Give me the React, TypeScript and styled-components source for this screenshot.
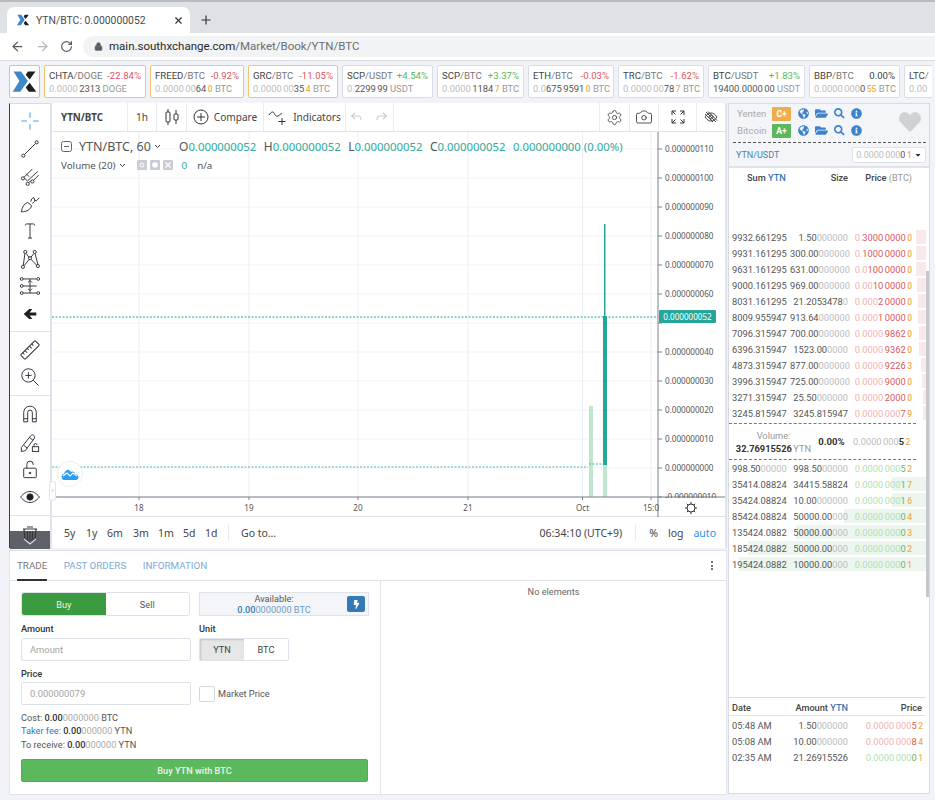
import React from 'react';
import styled, { createGlobalStyle } from 'styled-components';
import { ArrowLeft, ArrowRight, RotateCw, Lock, X, Plus, Settings, Camera } from 'lucide-react';
import { FaGlobeAmericas, FaFolderOpen, FaSearch, FaInfoCircle, FaHeart, FaBolt, FaCaretDown } from 'react-icons/fa';

const GlobalStyle = createGlobalStyle`
  html, body { margin: 0; padding: 0; background: #f1f3f8; }
  * { box-sizing: border-box; }
  body { font-family: Roboto, "Liberation Sans", sans-serif; color: #333; }
`;

const SITE_BLUE = '#337ab7';

const Page = styled.div`
  width: 935px;
  height: 800px;
  overflow: hidden;
  display: flex;
  flex-direction: column;
  background: #f1f3f8;
`;

/* browser chrome */
const TabStrip = styled.div`
  height: 33px;
  background: #dee1e6;
  border-top: 2px solid #b9bbbd;
  padding: 5px 0 0 7px;
  display: flex;
  align-items: stretch;
`;

const Tab = styled.div`
  width: 183px;
  background: #fff;
  border-radius: 7px 7px 0 0;
  display: flex;
  align-items: center;
  padding: 0 6px 0 9px;
  font: 10.4px Roboto, sans-serif;
  color: #4a4d50;
  gap: 6px;
`;

const TabTitle = styled.span`
  flex: 1;
  white-space: nowrap;
`;

const NewTab = styled.div`
  width: 32px;
  display: flex;
  align-items: center;
  justify-content: center;
  color: #333;
`;

const AddressBar = styled.div`
  height: 28px;
  background: #fff;
  border-bottom: 1px solid #dadce0;
  display: flex;
  align-items: center;
  padding: 0 0 1px 10px;
`;

const NavIcons = styled.div`
  display: flex;
  gap: 10px;
  width: 73px;
  align-items: center;
`;

const UrlPill = styled.div`
  flex: 1;
  height: 21px;
  background: #f1f3f4;
  border-radius: 11px 0 0 11px;
  display: flex;
  align-items: center;
  padding-left: 11px;
  gap: 6px;
  font: 11.5px Roboto, sans-serif;
  color: #6b6e72;
`;

const UrlHost = styled.span`
  color: #26282b;
`;

/* ticker */
const TickerRow = styled.div`
  height: 42px;
  padding: 4px 0 5px 9px;
  display: flex;
  gap: 4px;
  overflow: hidden;
  width: 932px;
`;

const LogoBox = styled.div`
  width: 31px;
  flex: none;
  background: #fff;
  border: 1px solid #a9c9e6;
  border-radius: 2px;
  display: flex;
  align-items: center;
  justify-content: center;
`;

const TickerCard = styled.div<{ $w: number; $hot?: boolean }>`
  width: ${(p) => p.$w}px;
  flex: none;
  background: #fff;
  border: 1px solid ${(p) => (p.$hot ? '#f6c372' : '#d9dde5')};
  border-radius: 2px;
  padding: 3px 4px 0 4px;
  font-size: 9.3px;
  line-height: 13px;
  white-space: nowrap;
`;

const TickerTop = styled.div`
  display: flex;
  justify-content: space-between;
  color: #444;
  font-size: 9.6px;
`;

const Pair = styled.span`
  color: #777;
`;

const Pct = styled.span<{ $dir: 'up' | 'down' | 'flat' }>`
  color: ${(p) => (p.$dir === 'up' ? '#5cb85c' : p.$dir === 'down' ? '#e0565b' : '#444')};
`;

const TickerPrice = styled.div`
  font-size: 9.4px;
  color: #999;
  word-spacing: -1px;
`;

const TickerUnit = styled.span`
  word-spacing: 0;
`;

const Pale = styled.span<{ $tone?: 'gray' | 'red' | 'green' }>`
  color: ${(p) => (p.$tone === 'red' ? '#f3b3b5' : p.$tone === 'green' ? '#b3dfb3' : '#bcbcbc')};
`;

const Strong = styled.span<{ $tone?: 'gray' | 'red' | 'green' }>`
  color: ${(p) => (p.$tone === 'red' ? '#d9575f' : p.$tone === 'green' ? '#68b868' : '#555')};
`;

const Tail = styled.span`
  color: #f0ad4e;
  font-size: 8.5px;
  font-weight: 500;
  margin-left: 1.5px;
`;

const Digits = ({ pale, strong, tail, tone }: { pale?: string; strong?: string; tail?: string; tone?: 'gray' | 'red' | 'green' }) => (
  <span>
    <Pale $tone={tone}>{pale}</Pale>
    <Strong $tone={tone}>{strong}</Strong>
    {tail && <Tail>{tail}</Tail>}
  </span>
);

/* main layout */
const Main = styled.div`
  display: flex;
  padding-left: 9px;
  gap: 1px;
  height: 692px;
`;

const LeftColumn = styled.div`
  width: 718px;
  flex: none;
  display: flex;
  flex-direction: column;
  gap: 2px;
`;

const ChartPanel = styled.div`
  height: 445px;
  display: flex;
  gap: 2px;
  padding-right: 2px;
  background: #e0e3eb;
`;

const Rail = styled.div`
  width: 41px;
  flex: none;
  background: #fff;
  border-left: 1px solid #3a3c40;
  border-top: 1px solid #d8dbe3;
  display: flex;
  flex-direction: column;
  position: relative;
`;

const RailGroup = styled.div<{ $h: number }>`
  height: ${(p) => p.$h}px;
  flex: none;
  border-bottom: 1px solid #e0e3eb;
  display: flex;
  flex-direction: column;
  justify-content: center;
  align-items: center;
`;

const RailButton = styled.div`
  height: 27.5px;
  display: flex;
  align-items: center;
  justify-content: center;
`;

const RailFoot = styled.div`
  flex: 1;
  display: flex;
  justify-content: center;
  padding-top: 10px;
  position: relative;
`;

const DarkBand = styled.div`
  position: absolute;
  left: 0;
  right: 0;
  bottom: -1px;
  height: 18px;
  background: #5f6168;
`;

const FoldHandle = styled.div`
  position: absolute;
  right: -6px;
  top: 377px;
  width: 7px;
  height: 20px;
  background: #fff;
  border: 1px solid #e0e3eb;
  border-radius: 3px;
  color: #b0b3bb;
  font: 7px Roboto, sans-serif;
  display: flex;
  align-items: center;
  justify-content: center;
  z-index: 2;
`;

const ChartBody = styled.div`
  flex: 1;
  display: flex;
  flex-direction: column;
  background: #fff;
`;

const ChartTop = styled.div`
  height: 29px;
  display: flex;
  border-bottom: 1px solid #e0e3eb;
  font: 10.1px "Noto Sans", sans-serif;
  color: #444;
`;

const TopCell = styled.div<{ $w: number; $end?: boolean }>`
  width: ${(p) => p.$w}px;
  flex: none;
  display: flex;
  align-items: center;
  justify-content: center;
  gap: 5px;
  border-right: ${(p) => (p.$end ? 'none' : '1px solid #e9ebf1')};
`;

const SymbolCell = styled(TopCell)`
  justify-content: flex-start;
  padding-left: 9px;
  font-weight: 700;
  font-size: 9.8px;
`;

const TopSpacer = styled.div`
  flex: 1;
  border-right: 1px solid #e9ebf1;
`;

const ChartArea = styled.div`
  height: 385px;
  position: relative;
  border-bottom: 1px solid #e0e3eb;
`;

const ChartSvg = styled.svg`
  display: block;
  text {
    font-family: "Noto Sans", sans-serif;
  }
`;

const Legend = styled.div`
  position: absolute;
  left: 9px;
  top: 5px;
  font: 12.5px "Noto Sans", sans-serif;
  color: #555;
`;

const LegendMain = styled.div`
  display: flex;
  align-items: center;
  height: 18px;
  white-space: nowrap;
`;

const LegendSymbol = styled.span`
  margin: 0 0 0 7px;
  width: 100px;
  display: flex;
  align-items: center;
  gap: 3px;
`;

const Ohlc = styled.span`
  color: #2fa99b;
  font-size: 11.35px;
  margin-right: 7.5px;
  b {
    color: #555;
    font-weight: 400;
    font-size: 12px;
  }
`;

const LegendVolume = styled.div`
  display: flex;
  align-items: center;
  gap: 3px;
  font-size: 9.8px;
  color: #555;
  height: 18px;
  margin-top: 1px;
`;

const VolumeCaret = styled.span`
  display: flex;
  margin-right: 8px;
`;

const MiniBox = styled.span`
  width: 10px;
  height: 10px;
  background: #c9ccd4;
  border-radius: 1px;
  display: flex;
  align-items: center;
  justify-content: center;
`;

const VolumeValue = styled.span`
  color: #2fa99b;
  margin: 0 7px 0 6px;
`;

const TvBadge = styled.div`
  position: absolute;
  left: 5px;
  top: 329px;
  width: 26px;
  height: 26px;
  border-radius: 50%;
  border: 1px solid #eceef3;
  background: #fff;
  display: flex;
  align-items: center;
  justify-content: center;
`;

const PriceTag = styled.div`
  position: absolute;
  left: 607px;
  top: 178px;
  width: 57px;
  height: 13px;
  background: #26a69a;
  color: #fff;
  border-radius: 1px;
  font: 8.1px/13px "Noto Sans", sans-serif;
  text-align: center;
`;

const RangeBar = styled.div`
  flex: 1;
  display: flex;
  align-items: center;
  padding-left: 12px;
  font: 10.5px "Noto Sans", sans-serif;
  color: #444;
`;

const RangeItem = styled.span<{ $w: number }>`
  width: ${(p) => p.$w}px;
  flex: none;
`;

const RangeRule = styled.span<{ $ml: number; $mr: number }>`
  width: 1px;
  height: 16px;
  background: #e9ebf1;
  margin: 0 ${(p) => p.$mr}px 0 ${(p) => p.$ml}px;
`;

const RangeRight = styled.div`
  margin-left: auto;
  display: flex;
  align-items: center;
  padding-right: 9px;
`;

const ScaleLink = styled.span<{ $on?: boolean }>`
  color: ${(p) => (p.$on ? '#2196f3' : '#444')};
  margin-left: 10px;
`;

/* trade panel */
const TradePanel = styled.div`
  height: 245px;
  background: #fff;
  border: 1px solid #e0e3eb;
  display: flex;
  flex-direction: column;
`;

const TabsRow = styled.div`
  height: 30px;
  display: flex;
  border-bottom: 1px solid #dfe2e8;
  padding: 0 13px 0 7px;
  gap: 16.5px;
  align-items: stretch;
  font-size: 9.8px;
`;

const PanelTab = styled.div<{ $active?: boolean }>`
  display: flex;
  align-items: center;
  color: ${(p) => (p.$active ? '#777' : '#7fa9d2')};
  border-bottom: 2px solid ${(p) => (p.$active ? '#333' : 'transparent')};
  margin-bottom: -1px;
`;

const Kebab = styled.div`
  margin-left: auto;
  display: flex;
  flex-direction: column;
  justify-content: center;
  gap: 1.5px;
  i {
    width: 2px;
    height: 2px;
    background: #444;
    border-radius: 50%;
    display: block;
  }
`;

const TradeBody = styled.div`
  flex: 1;
  display: flex;
`;

const FormPane = styled.div`
  width: 371px;
  flex: none;
  border-right: 1px solid #dfe2e8;
  padding: 11px 11px 0 11px;
  font-size: 9.2px;
`;

const EmptyPane = styled.div`
  flex: 1;
  text-align: center;
  padding-top: 5px;
  font-size: 9.2px;
  color: #666;
`;

const FormGrid = styled.div`
  display: grid;
  grid-template-columns: 170px 170px;
  column-gap: 8px;
`;

const BuySell = styled.div`
  height: 24px;
  display: flex;
  border: 1px solid #dfe2e8;
  border-radius: 2px;
  width: 169px;
`;

const SideButton = styled.div<{ $on?: boolean }>`
  flex: 1;
  display: flex;
  align-items: center;
  justify-content: center;
  background: ${(p) => (p.$on ? '#3c9a41' : '#fff')};
  color: ${(p) => (p.$on ? '#e6f5e6' : '#555')};
  border-radius: 2px 0 0 2px;
`;

const Available = styled.div`
  height: 24px;
  background: #f3f5f9;
  border: 1px solid #dfe2e8;
  text-align: center;
  line-height: 10.5px;
  padding: 1px 20px 0 0;
  position: relative;
  color: #555;
`;

const BoltButton = styled.div`
  position: absolute;
  right: 3px;
  top: 3px;
  width: 18px;
  height: 16px;
  background: ${SITE_BLUE};
  border-radius: 2px;
  display: flex;
  align-items: center;
  justify-content: center;
  color: #fff;
`;

const BlueNum = styled.div`
  color: #6f9cc6;
  b {
    color: ${SITE_BLUE};
    font-weight: 500;
  }
`;

const FieldLabel = styled.div<{ $top: number; $bottom?: number }>`
  font-weight: 500;
  line-height: 12px;
  margin-top: ${(p) => p.$top}px;
  margin-bottom: ${(p) => p.$bottom ?? 3}px;
  color: #333;
`;

const TextBox = styled.div`
  height: 23px;
  width: 170px;
  border: 1px solid #dfe2e8;
  border-radius: 2px;
  padding-left: 8px;
  display: flex;
  align-items: center;
  color: #a5a5a5;
  font-size: 9.4px;
`;

const UnitGroup = styled.div`
  display: flex;
  width: 90px;
  height: 23px;
  border: 1px solid #dfe2e8;
  border-radius: 2px;
`;

const UnitButton = styled.div<{ $on?: boolean }>`
  flex: 1;
  display: flex;
  align-items: center;
  justify-content: center;
  background: ${(p) => (p.$on ? '#e6e6e6' : '#fff')};
  box-shadow: ${(p) => (p.$on ? 'inset 1px 1px 2px rgba(0,0,0,.15)' : 'none')};
  color: #444;
`;

const MarketCheck = styled.label`
  display: flex;
  align-items: center;
  gap: 3px;
  height: 23px;
  color: #555;
`;

const CheckBox = styled.span`
  width: 16px;
  height: 16px;
  border: 1px solid #d5d8df;
  border-radius: 2px;
`;

const Summary = styled.div`
  margin-top: 6px;
  line-height: 13.4px;
  color: #555;
  b {
    color: #333;
    font-weight: 500;
  }
`;

const FeeLabel = styled.span`
  color: ${SITE_BLUE};
`;

const Zeros = styled.span`
  color: #aaa;
`;

const SubmitButton = styled.div`
  margin-top: 8px;
  height: 23px;
  background: #5cb85c;
  border: 1px solid #4cae4c;
  border-radius: 2px;
  display: flex;
  align-items: center;
  justify-content: center;
  color: #e9f7e9;
  width: 347px;
  font-weight: 500;
`;

/* right column */
const RightColumn = styled.div`
  width: 202px;
  flex: none;
  height: 691px;
  display: flex;
  flex-direction: column;
  background: #fff;
  border: 1px solid #d8dbe3;
  position: relative;
  font-size: 9.3px;
`;

const CoinHead = styled.div`
  height: 64px;
  background: #f3f5f9;
  border-bottom: 2px solid #dfe2e8;
  padding: 1px 3px 0 4px;
  position: relative;
`;

const CoinRow = styled.div`
  display: flex;
  align-items: center;
  height: 17px;
  color: #aaa;
  font-size: 9.6px;
`;

const CoinName = styled.span`
  width: 39px;
  padding-left: 4px;
`;

const Grade = styled.span<{ $c: string }>`
  width: 19px;
  height: 14px;
  background: ${(p) => p.$c};
  color: #fff;
  font-size: 8.5px;
  font-weight: 700;
  border-radius: 1px;
  display: flex;
  align-items: center;
  justify-content: center;
  margin-right: 7px;
`;

const CoinIcons = styled.span`
  display: flex;
  gap: 6px;
  color: #3c83cc;
  align-items: center;
`;

const HeartWrap = styled.div`
  position: absolute;
  right: 8px;
  top: 7px;
  color: #cfd2d4;
`;

const DashRule = styled.div`
  border-top: 1px dashed #555;
  margin-top: 3px;
`;

const MarketRow = styled.div`
  display: flex;
  justify-content: space-between;
  align-items: center;
  height: 22px;
  padding: 1px 0 0 3px;
  color: #4a7fb5;
  font-size: 9px;
`;

const MarketSelect = styled.div`
  width: 74px;
  height: 16px;
  border: 1px solid #dfe2e8;
  border-radius: 2px;
  background: #fff;
  display: flex;
  align-items: center;
  justify-content: center;
  gap: 2px;
  word-spacing: -1px;
  color: #333;
`;

const BookHead = styled.div`
  height: 19px;
  display: grid;
  grid-template-columns: 119px 64px;
  align-items: center;
  font-weight: 500;
  color: #444;
  font-size: 9.2px;
`;

const SumHead = styled.span`
  padding-left: 18px;
  display: flex;
  justify-content: space-between;
`;

const HeadUnit = styled.span`
  color: ${SITE_BLUE};
`;

const HeadPale = styled.span`
  color: #999;
  font-weight: 400;
`;

const AskList = styled.div`
  height: 236px;
  display: flex;
  flex-direction: column;
  justify-content: flex-end;
  padding-bottom: 2px;
`;

const BookRow = styled.div`
  height: 16px;
  display: grid;
  grid-template-columns: 58px 58px 64px;
  align-items: center;
  padding-left: 3px;
  position: relative;
  white-space: nowrap;
  color: #555;
  word-spacing: -0.8px;
`;

const Cell = styled.span<{ $right?: boolean }>`
  text-align: ${(p) => (p.$right ? 'right' : 'left')};
  position: relative;
`;

const DepthBar = styled.div<{ $side: 'ask' | 'bid' }>`
  position: absolute;
  right: 3px;
  top: 1px;
  bottom: 1px;
  background: ${(p) => (p.$side === 'ask' ? '#f9e9ea' : '#ecf5ee')};
`;

const MidBlock = styled.div`
  height: 37px;
  margin-right: 13px;
  border-top: 1px dashed #777;
  border-bottom: 1px dashed #777;
  display: flex;
  align-items: center;
  padding-left: 3px;
  word-spacing: -0.8px;
  white-space: nowrap;
`;

const VolumeBlock = styled.div`
  width: 83px;
  text-align: center;
  color: #999;
  line-height: 13px;
  b {
    color: #333;
    font-weight: 700;
  }
`;

const MidPct = styled.b`
  color: #333;
  width: 33px;
  text-align: center;
  font-size: 9.6px;
  margin-right: 5px;
`;

const BidList = styled.div``;

const Filler = styled.div`
  flex: 1;
`;

const TradesHead = styled.div`
  height: 19px;
  border-top: 1px solid #d8dbe3;
  border-bottom: 1px solid #dfe2e8;
  margin-right: 4px;
  display: grid;
  grid-template-columns: 42px 74px 1fr;
  align-items: center;
  padding: 1px 3px 0;
  font-weight: 500;
  color: #444;
  font-size: 9.2px;
`;

const TradeRow = styled.div`
  height: 16px;
  display: grid;
  grid-template-columns: 42px 74px 1fr;
  align-items: center;
  padding: 0 6px 0 3px;
  color: #555;
  word-spacing: -0.8px;
  white-space: nowrap;
`;

const TradeTime = styled.span`
  word-spacing: 0;
`;

const TradeList = styled.div`
  height: 77px;
  padding-top: 1px;
`;

const ScrollThumb = styled.div`
  position: absolute;
  right: 0;
  top: 167px;
  width: 3.5px;
  height: 326px;
  background: #c4c7cc;
`;

type Tone = 'gray' | 'red' | 'green';

const tickers = [
  { w: 102, hot: true, name: 'CHTA', pair: '/DOGE', pct: '-22.84%', dir: 'down', pale: '0.0000 ', strong: '2313', tail: '', unit: ' DOGE' },
  { w: 94, hot: true, name: 'FREED', pair: '/BTC', pct: '-0.92%', dir: 'down', pale: '0.0000 00', strong: '64', tail: '0', unit: ' BTC' },
  { w: 90, hot: true, name: 'GRC', pair: '/BTC', pct: '-11.05%', dir: 'down', pale: '0.0000 00', strong: '35', tail: '4', unit: ' BTC' },
  { w: 91, name: 'SCP', pair: '/USDT', pct: '+4.54%', dir: 'up', pale: '0.', strong: '2299 99', tail: '', unit: ' USDT' },
  { w: 87, name: 'SCP', pair: '/BTC', pct: '+3.37%', dir: 'up', pale: '0.0000 ', strong: '1184', tail: '7', unit: ' BTC' },
  { w: 86, name: 'ETH', pair: '/BTC', pct: '-0.03%', dir: 'down', pale: '0.0', strong: '675 9591', tail: '0', unit: ' BTC' },
  { w: 86, name: 'TRC', pair: '/BTC', pct: '-1.62%', dir: 'down', pale: '0.0000 00', strong: '78', tail: '7', unit: ' BTC' },
  { w: 97, name: 'BTC', pair: '/USDT', pct: '+1.83%', dir: 'up', pale: '', strong: '19400.0000 00', tail: '', unit: ' USDT' },
  { w: 91, name: 'BBP', pair: '/BTC', pct: '0.00%', dir: 'flat', pale: '0.0000 000', strong: '0', tail: '55', unit: ' BTC' },
] as const;

const asks = [
  ['9932.661295', '1.50', '000000', '0.', '3000 0000', '0', 10],
  ['9931.161295', '300.00', '000000', '0.', '1000 0000', '0', 10],
  ['9631.161295', '631.00', '000000', '0.0', '100 0000', '0', 10],
  ['9000.161295', '969.00', '000000', '0.00', '10 0000', '0', 9],
  ['8031.161295', '21.2053478', '0', '0.000', '2 0000', '0', 8],
  ['8009.955947', '913.64', '000000', '0.000', '1 0000', '0', 8],
  ['7096.315947', '700.00', '000000', '0.0000 ', '9862', '0', 7],
  ['6396.315947', '1523.00', '0000', '0.0000 ', '9362', '0', 7],
  ['4873.315947', '877.00', '000000', '0.0000 ', '9226', '3', 5],
  ['3996.315947', '725.00', '000000', '0.0000 ', '9000', '0', 4],
  ['3271.315947', '25.50', '000000', '0.0000 ', '2000', '0', 3],
  ['3245.815947', '3245.815947', '', '0.0000 000', '7', '9', 3],
] as const;

const bids = [
  ['998.50', '00000', '998.50', '00000', '0.0000 000', '5', '2', 0],
  ['35414.08824', '', '34415.58824', '', '0.0000 000', '1', '7', 34],
  ['35424.08824', '', '10.00', '000000', '0.0000 000', '1', '6', 34],
  ['85424.08824', '', '50000.00', '000', '0.0000 000', '0', '4', 82],
  ['135424.0882', '', '50000.00', '000', '0.0000 000', '0', '3', 130],
  ['185424.0882', '', '50000.00', '000', '0.0000 000', '0', '2', 178],
  ['195424.0882', '', '10000.00', '000', '0.0000 000', '0', '1', 187],
] as const;

const trades: { time: string; amt: string; zeros: string; price: [string, string]; tone: Tone }[] = [
  { time: '05:48 AM', amt: '1.50', zeros: '000000', price: ['5', '2'], tone: 'red' },
  { time: '05:08 AM', amt: '10.00', zeros: '000000', price: ['8', '4'], tone: 'red' },
  { time: '02:35 AM', amt: '21.26915526', zeros: '', price: ['0', '1'], tone: 'green' },
];

const axisLabels = ['0.000000110', '0.000000100', '0.000000090', '0.000000080', '0.000000070', '0.000000060', '', '0.000000040', '0.000000030', '0.000000020', '0.000000010', '0.000000000', '-0.000000010'];
const timeLabels: [number, string][] = [[139, '18'], [249, '19'], [358, '20'], [468, '21'], [582.5, 'Oct'], [651, '15:0']];

const ToolIcon = ({ children, color = '#2a2e39' }: { children: React.ReactNode; color?: string }) => (
  <svg width="22" height="22" viewBox="0 0 28 28" fill="none" stroke={color} strokeWidth="1.2">
    {children}
  </svg>
);

const railGroups: { h: number; tools: React.ReactNode[] }[] = [
  {
    h: 228,
    tools: [
      <ToolIcon color="#3f96e6"><path d="M14 3v7M14 18v7M3 14h7M18 14h7" /></ToolIcon>,
      <ToolIcon><circle cx="5.5" cy="22.5" r="2" /><circle cx="22.5" cy="5.5" r="2" /><path d="M7 21 21 7" /></ToolIcon>,
      <ToolIcon><circle cx="5" cy="17" r="2" /><circle cx="11" cy="24" r="2" /><circle cx="17" cy="21" r="2" /><path d="M6.500 15.500 17 5M12.500 22.500 15 20M7 17l4 3.500M11 20 24 8M18.500 19.500 25 13M9 11l4 4" /></ToolIcon>,
      <ToolIcon><path d="M3 24c1-6 3-10 8-12l5 4c-1 5-6 8-13 8zM15 11c.5-3 2-5 4-5l1 3c0 2-1 3-3 4M20 9l2 1 4-4" /></ToolIcon>,
      <ToolIcon><path d="M8 7c0-1.500 1-2 2-2h8c1 0 2 .5 2 2M14 5v18M11.500 23h5" /></ToolIcon>,
      <ToolIcon><circle cx="5" cy="24" r="2" /><circle cx="8" cy="5" r="2" /><circle cx="14" cy="13" r="2" /><circle cx="20" cy="5" r="2" /><circle cx="24" cy="23" r="2" /><path d="M5.500 22 7.500 7M9 7l4 5M15 12l4-5M20.500 7 24 21M6.500 22.500 13 14.500M15.500 14.500 22.500 22" /></ToolIcon>,
      <ToolIcon><circle cx="3.500" cy="5" r="1.800" /><circle cx="24.500" cy="5" r="1.800" /><circle cx="3.500" cy="23" r="1.800" /><circle cx="24.500" cy="23" r="1.800" /><circle cx="3.500" cy="14" r="1.800" /><path d="M5.500 5h17M5.500 23h17M5.500 14h17M14 5v18M11.500 17.500 14 20l2.500-2.500M11.500 9.500 14 7l2.500 2.500" /></ToolIcon>,
      <ToolIcon><path fill="#1c1e24" stroke="none" d="M6 14l7-6.500h4l-3.500 4.500H22v4h-8.500l3.500 4.500h-4z" /></ToolIcon>,
    ],
  },
  {
    h: 64,
    tools: [
      <ToolIcon><g transform="rotate(-45 14 14)"><rect x="1" y="10" width="26" height="8" rx="1" /><path d="M5 10v3M9 10v4M13 10v3M17 10v4M21 10v3" /></g></ToolIcon>,
      <ToolIcon><circle cx="12" cy="12" r="8.500" /><path d="M12 8v8M8 12h8M18 18l7 7" /></ToolIcon>,
    ],
  },
  {
    h: 120,
    tools: [
      <ToolIcon><path d="M6 24V12a8 8 0 0 1 16 0v12h-5V12a3 3 0 0 0-6 0v12zM6 20h5M17 20h5" /></ToolIcon>,
      <ToolIcon><path d="M3 21 15 6c1.500-1.500 3-1.500 4 0 1 1 1 2.500 0 4L8 25l-5 1zM6 18l4.500 4M13 8l5 4" /><rect x="17" y="20" width="8" height="6" /><path d="M19 20v-2a2 2 0 0 1 4 0" /></ToolIcon>,
      <ToolIcon><rect x="6" y="13" width="16" height="12" rx="1" /><path d="M10 13V8a4 4 0 0 1 8 0v1" /><circle cx="14" cy="19" r="1" fill="#2a2e39" /></ToolIcon>,
      <ToolIcon><path d="M2 14c4-5 8-7 12-7s8 2 12 7c-4 5-8 7-12 7s-8-2-12-7z" /><circle cx="14" cy="14" r="4" fill="#1c1e24" /></ToolIcon>,
    ],
  },
];

const BrandX = ({ size }: { size: number }) => (
  <svg width={size} height={size} viewBox="0 0 32 32">
    <polygon points="3,4 12,4 20,15.500 11,28 2,28 10,15.500" fill="#3e87c9" />
    <polygon points="20,4 29,4 22,13.500 17.500,8" fill="#1c1e22" />
    <polygon points="17.500,23 22,17.500 30,28 21,28" fill="#1c1e22" />
  </svg>
);

const CoinLinks = () => (
  <CoinIcons>
    <FaGlobeAmericas size={11} />
    <FaFolderOpen size={13} />
    <FaSearch size={10.5} />
    <FaInfoCircle size={11} />
  </CoinIcons>
);

const Caret = () => (
  <svg width="7" height="5" viewBox="0 0 7 5" fill="none" stroke="#444">
    <path d="M1 1l2.500 2.500L6 1" />
  </svg>
);

const App = () => (
  <Page>
    <GlobalStyle />
    <TabStrip>
      <Tab>
        <BrandX size={14} />
        <TabTitle>YTN/BTC: 0.000000052</TabTitle>
        <X size={11} strokeWidth={2.4} color="#333" />
      </Tab>
      <NewTab>
        <Plus size={14} strokeWidth={2} />
      </NewTab>
    </TabStrip>
    <AddressBar>
      <NavIcons>
        <ArrowLeft size={15} color="#5a5d60" strokeWidth={2} />
        <ArrowRight size={15} color="#b5b7ba" strokeWidth={2} />
        <RotateCw size={13} color="#5a5d60" strokeWidth={2.2} />
      </NavIcons>
      <UrlPill>
        <Lock size={9} fill="#5a5d60" color="#5a5d60" />
        <span>
          <UrlHost>main.southxchange.com</UrlHost>/Market/Book/YTN/BTC
        </span>
      </UrlPill>
    </AddressBar>
    <TickerRow>
      <LogoBox>
        <BrandX size={27} />
      </LogoBox>
      {tickers.map((t, i) => (
        <TickerCard key={i} $w={t.w} $hot={'hot' in t}>
          <TickerTop>
            <span>
              {t.name}
              <Pair>{t.pair}</Pair>
            </span>
            <Pct $dir={t.dir}>{t.pct}</Pct>
          </TickerTop>
          <TickerPrice>
            <Digits pale={t.pale} strong={t.strong} tail={t.tail} />
            <TickerUnit>{t.unit}</TickerUnit>
          </TickerPrice>
        </TickerCard>
      ))}
      <TickerCard $w={29}>
        <TickerTop>
          <span>
            LTC<Pair>/</Pair>
          </span>
        </TickerTop>
        <TickerPrice>
          <Pale>0.00</Pale>
        </TickerPrice>
      </TickerCard>
    </TickerRow>
    <Main>
      <LeftColumn>
        <ChartPanel>
          <Rail>
            {railGroups.map((g) => (
              <RailGroup key={g.h} $h={g.h}>
                {g.tools.map((tool, i) => (
                  <RailButton key={i}>{tool}</RailButton>
                ))}
              </RailGroup>
            ))}
            <RailFoot>
              <DarkBand />
              <svg width="22" height="20" viewBox="0 0 22 20" fill="none" stroke="#33353b" strokeWidth="1.2" style={{ position: 'relative' }}>
                <path d="M5 3h12l-1 11H6zM4 3h14M8 1h6M8.500 5v8M11 5v8M13.500 5v8" />
                <path d="M5 13l6 5 6-5" stroke="#d8d9dc" />
              </svg>
            </RailFoot>
            <FoldHandle>‹</FoldHandle>
          </Rail>
          <ChartBody>
            <ChartTop>
              <SymbolCell $w={76}>YTN/BTC</SymbolCell>
              <TopCell $w={29}>1h</TopCell>
              <TopCell $w={30}>
                <svg width="16" height="18" viewBox="0 0 16 18" fill="none" stroke="#333" strokeWidth="1">
                  <rect x="2" y="4" width="4" height="10" rx="1" />
                  <path d="M4 1v3M4 14v3M12 2v4M12 12v4" />
                  <rect x="10" y="6" width="4" height="6" rx="1" />
                </svg>
              </TopCell>
              <TopCell $w={77}>
                <svg width="16" height="16" viewBox="0 0 16 16" fill="none" stroke="#333" strokeWidth="1">
                  <circle cx="8" cy="8" r="7" />
                  <path d="M8 4v8M4 8h8" />
                </svg>
                Compare
              </TopCell>
              <TopCell $w={82}>
                <svg width="20" height="18" viewBox="0 0 20 18" fill="none" stroke="#333" strokeWidth="1">
                  <path d="M1 7c2-3 4-4 5-2s2 4 4 3 3-3 4-2" />
                  <path d="M14 10v7M10.500 13.500h7" />
                </svg>
                Indicators
              </TopCell>
              <TopCell $w={48}>
                <svg width="40" height="12" viewBox="0 0 40 12" fill="none" stroke="#c9ccd2" strokeWidth="1.1">
                  <path d="M5 2 1.500 5 5 8M2 5h6c2 0 3 1.500 3 4M33 2l3.500 3L33 8M36 5h-6c-2 0-3 1.500-3 4" />
                </svg>
              </TopCell>
              <TopSpacer />
              <TopCell $w={30}>
                <Settings size={17} strokeWidth={1.1} color="#333" />
              </TopCell>
              <TopCell $w={29}>
                <Camera size={18} strokeWidth={1.1} color="#333" />
              </TopCell>
              <TopCell $w={38}>
                <svg width="14" height="14" viewBox="0 0 14 14" fill="none" stroke="#333" strokeWidth="1">
                  <path d="M1 5V1h4M1 1l3.500 3.500M9 1h4v4M13 1 9.500 4.500M1 9v4h4M1 13l3.500-3.500M13 9v4H9M13 13 9.500 9.500" />
                </svg>
              </TopCell>
              <TopCell $w={28} $end>
                <svg width="14" height="12" viewBox="0 0 14 12" fill="none" stroke="#444" strokeWidth="1">
                  <path d="M1 6c2-3 4-4 6-4s4 1 6 4c-2 3-4 4-6 4S3 9 1 6z" />
                  <circle cx="7" cy="6" r="2" />
                  <path d="M2 1l10 10M4 .500l9 9M1 3l8 8" />
                </svg>
              </TopCell>
            </ChartTop>
            <ChartArea>
              <ChartSvg width="673" height="385" viewBox="52 132 673 385">
                {axisLabels.map((label, i) => (
                  <path key={i} d={`M52 ${149 + i * 29}H658`} stroke="#f0f3fa" strokeWidth="1" />
                ))}
                {timeLabels.map(([x]) => (
                  <path key={x} d={`M${x} 132V497`} stroke="#eaeff5" strokeWidth="1" />
                ))}
                <rect x="589" y="406" width="4" height="91" fill="#c0e6cf" />
                <rect x="603" y="465" width="4" height="32" fill="#c0e6cf" />
                <path d="M52 317H658" stroke="#26a69a" strokeWidth="1" strokeDasharray="2 1.500" />
                <path d="M52 467H588M589 464H602" stroke="#26a69a" strokeWidth="1" strokeDasharray="2 1.500" opacity="0.8" />
                <rect x="604" y="224" width="1.500" height="92" fill="#26a69a" />
                <rect x="603" y="316" width="4" height="149" fill="#26a69a" />
                <path d="M658 132V517M52 497H725" stroke="#7d8089" strokeWidth="1" fill="none" />
                {axisLabels.map((label, i) => (
                  <g key={i}>
                    <path d={`M658 ${149 + i * 29}h4`} stroke="#7d8089" />
                    <text x="665" y={152 + i * 29} fontSize="8.100" fill="#555">{label}</text>
                  </g>
                ))}
                {timeLabels.map(([x, label]) => (
                  <g key={x}>
                    <path d={`M${x} 497v3`} stroke="#7d8089" />
                    <text x={x} y="511" fontSize="8.100" fill="#555" textAnchor="middle">{label}</text>
                  </g>
                ))}
                <rect x="659" y="498" width="66" height="18" fill="#fff" />
                <g transform="translate(685 502)" fill="none" stroke="#333" strokeWidth="1">
                  <circle cx="6" cy="6" r="4" />
                  <path d="M6 0v2M6 10v2M0 6h2M10 6h2M1.800 1.800l1.400 1.400M8.800 8.800l1.400 1.400M1.800 10.200l1.400-1.400M8.800 3.200l1.400-1.400" />
                </g>
              </ChartSvg>
              <Legend>
                <LegendMain>
                  <svg width="11" height="11" viewBox="0 0 11 11" fill="none" stroke="#666">
                    <rect x=".5" y=".5" width="10" height="10" rx="2" />
                    <path d="M3 5.500h5" />
                  </svg>
                  <LegendSymbol>
                    YTN/BTC, 60
                    <Caret />
                  </LegendSymbol>
                  <Ohlc><b>O</b>0.000000052</Ohlc>
                  <Ohlc><b>H</b>0.000000052</Ohlc>
                  <Ohlc><b>L</b>0.000000052</Ohlc>
                  <Ohlc><b>C</b>0.000000052</Ohlc>
                  <Ohlc>0.000000000 (0.00%)</Ohlc>
                </LegendMain>
                <LegendVolume>
                  Volume (20)
                  <VolumeCaret>
                    <Caret />
                  </VolumeCaret>
                  <MiniBox>
                    <svg width="8" height="8" viewBox="0 0 8 8" fill="none" stroke="#fff"><circle cx="4" cy="4" r="2" /></svg>
                  </MiniBox>
                  <MiniBox>
                    <svg width="8" height="8" viewBox="0 0 8 8" fill="#fff"><circle cx="4" cy="4" r="2.800" /></svg>
                  </MiniBox>
                  <MiniBox>
                    <svg width="8" height="8" viewBox="0 0 8 8" fill="none" stroke="#fff" strokeWidth="1.300"><path d="M1.500 1.500l5 5M6.500 1.500l-5 5" /></svg>
                  </MiniBox>
                  <VolumeValue>0</VolumeValue>
                  n/a
                </LegendVolume>
              </Legend>
              <TvBadge>
                <svg width="18" height="12" viewBox="0 0 18 12" fill="#2a9df4">
                  <path d="M1 10c-1-2 0-4 2-4 1-3 3-5 5-4l2 2c2-1 4 0 4 2 3 0 4 3 3 5-1 1-2 1-3 1H3c-1 0-2-1-2-2z" />
                  <path d="M2 8l4-3 3 3 3-3 4 3" stroke="#fff" strokeWidth="1.2" fill="none" />
                </svg>
              </TvBadge>
              <PriceTag>0.000000052</PriceTag>
            </ChartArea>
            <RangeBar>
              <RangeItem $w={22}>5y</RangeItem>
              <RangeItem $w={21}>1y</RangeItem>
              <RangeItem $w={26}>6m</RangeItem>
              <RangeItem $w={25}>3m</RangeItem>
              <RangeItem $w={25}>1m</RangeItem>
              <RangeItem $w={22}>5d</RangeItem>
              <RangeItem $w={12}>1d</RangeItem>
              <RangeRule $ml={11} $mr={12} />
              Go to…
              <RangeRight>
                06:34:10 (UTC+9)
                <RangeRule $ml={13} $mr={13} />
                %
                <ScaleLink>log</ScaleLink>
                <ScaleLink $on>auto</ScaleLink>
              </RangeRight>
            </RangeBar>
          </ChartBody>
        </ChartPanel>
        <TradePanel>
          <TabsRow>
            <PanelTab $active>TRADE</PanelTab>
            <PanelTab>PAST ORDERS</PanelTab>
            <PanelTab>INFORMATION</PanelTab>
            <Kebab>
              <i />
              <i />
              <i />
            </Kebab>
          </TabsRow>
          <TradeBody>
            <FormPane>
              <FormGrid>
                <BuySell>
                  <SideButton $on>Buy</SideButton>
                  <SideButton>Sell</SideButton>
                </BuySell>
                <Available>
                  Available:
                  <BlueNum>
                    <b>0.00</b>0000000 BTC
                  </BlueNum>
                  <BoltButton>
                    <FaBolt size={9} />
                  </BoltButton>
                </Available>
                <div>
                  <FieldLabel $top={7}>Amount</FieldLabel>
                  <TextBox>Amount</TextBox>
                </div>
                <div>
                  <FieldLabel $top={7}>Unit</FieldLabel>
                  <UnitGroup>
                    <UnitButton $on>YTN</UnitButton>
                    <UnitButton>BTC</UnitButton>
                  </UnitGroup>
                </div>
                <div>
                  <FieldLabel $top={7} $bottom={2}>Price</FieldLabel>
                  <TextBox>0.000000079</TextBox>
                </div>
                <div>
                  <FieldLabel $top={7} $bottom={2}>&nbsp;</FieldLabel>
                  <MarketCheck>
                    <CheckBox />
                    Market Price
                  </MarketCheck>
                </div>
              </FormGrid>
              <Summary>
                <div>
                  Cost: <b>0.00</b><Zeros>0000000</Zeros> BTC
                </div>
                <div>
                  <FeeLabel>Taker fee:</FeeLabel> <b>0.00</b><Zeros>000000</Zeros> YTN
                </div>
                <div>
                  To receive: <b>0.00</b><Zeros>000000</Zeros> YTN
                </div>
              </Summary>
              <SubmitButton>Buy YTN with BTC</SubmitButton>
            </FormPane>
            <EmptyPane>No elements</EmptyPane>
          </TradeBody>
        </TradePanel>
      </LeftColumn>
      <RightColumn>
        <CoinHead>
          <CoinRow>
            <CoinName>Yenten</CoinName>
            <Grade $c="#f0ad4e">C+</Grade>
            <CoinLinks />
          </CoinRow>
          <CoinRow>
            <CoinName>Bitcoin</CoinName>
            <Grade $c="#5cb85c">A+</Grade>
            <CoinLinks />
          </CoinRow>
          <HeartWrap>
            <FaHeart size={22} />
          </HeartWrap>
          <DashRule />
          <MarketRow>
            YTN/USDT
            <MarketSelect>
              <Digits pale="0.0000 000" strong="0" tail="1" />
              <FaCaretDown size={8} />
            </MarketSelect>
          </MarketRow>
        </CoinHead>
        <BookHead>
          <SumHead>
            <span>
              Sum <HeadUnit>YTN</HeadUnit>
            </span>
            Size
          </SumHead>
          <Cell $right>
            Price <HeadPale>(BTC)</HeadPale>
          </Cell>
        </BookHead>
        <AskList>
          {asks.map((a, i) => (
            <BookRow key={i}>
              <DepthBar $side="ask" style={{ width: a[6] }} />
              <Cell>{a[0]}</Cell>
              <Cell $right>
                {a[1]}
                <Pale>{a[2]}</Pale>
              </Cell>
              <Cell $right>
                <Digits pale={a[3]} strong={a[4]} tail={a[5]} tone="red" />
              </Cell>
            </BookRow>
          ))}
        </AskList>
        <MidBlock>
          <VolumeBlock>
            Volume:
            <div>
              <b>32.76915526</b> YTN
            </div>
          </VolumeBlock>
          <MidPct>0.00%</MidPct>
          <span>
            <Pale>0.0000 000</Pale>
            <b>5</b>
            <Tail>2</Tail>
          </span>
        </MidBlock>
        <BidList>
          {bids.map((b, i) => (
            <BookRow key={i}>
              {b[7] > 0 && <DepthBar $side="bid" style={{ width: b[7] }} />}
              <Cell>
                {b[0]}
                <Pale>{b[1]}</Pale>
              </Cell>
              <Cell $right>
                {b[2]}
                <Pale>{b[3]}</Pale>
              </Cell>
              <Cell $right>
                <Digits pale={b[4]} strong={b[5]} tail={b[6]} tone="green" />
              </Cell>
            </BookRow>
          ))}
        </BidList>
        <Filler />
        <TradesHead>
          <span>Date</span>
          <Cell $right>
            Amount <HeadUnit>YTN</HeadUnit>
          </Cell>
          <Cell $right>Price</Cell>
        </TradesHead>
        <TradeList>
          {trades.map((t) => (
            <TradeRow key={t.time}>
              <TradeTime>{t.time}</TradeTime>
              <Cell $right>
                {t.amt}
                <Pale>{t.zeros}</Pale>
              </Cell>
              <Cell $right>
                <Digits pale="0.0000 000" strong={t.price[0]} tail={t.price[1]} tone={t.tone} />
              </Cell>
            </TradeRow>
          ))}
        </TradeList>
        <ScrollThumb />
      </RightColumn>
    </Main>
  </Page>
);

export default App;
